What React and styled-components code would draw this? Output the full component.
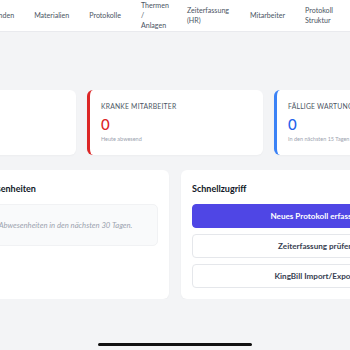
import styled, { createGlobalStyle } from "styled-components";

const GlobalStyle = createGlobalStyle`
body{
    margin:0;
    background:#f3f4f6;
    font-family: Lato, "Noto Sans", sans-serif;
    overflow:hidden;
}
`

const Header = styled.header`
height:31px;
background:#fff;
border-bottom:1px solid #e9eaee;
display:flex;
justify-content:flex-end;
align-items:center;
gap:20px;
padding-right:17px;
overflow:hidden;
`

const NavItem = styled.a`
flex-shrink:0;
width:${props => props.$w ? props.$w + 'px' : 'min-content'};
font-size:7.1px;
line-height:10px;
color:#4b5563;
text-decoration:none;
`

const Main = styled.main`
display:flex;
justify-content:center;
padding-top:58px;
`

const Inner = styled.div`
width:550px;
flex-shrink:0;
`

const StatGrid = styled.div`
display:grid;
grid-template-columns:repeat(3, 1fr);
gap:11px;
`

const StatCard = styled.div`
background:#fff;
border-radius:6px;
border-left:${props => props.$accent ? `3px solid ${props.$accent}` : 'none'};
padding:12px 12px 12px ${props => props.$accent ? '11px' : '14px'};
box-shadow:0 1px 2px rgba(0,0,0,0.03);
`

const StatLabel = styled.div`
font-size:6.8px;
line-height:9px;
letter-spacing:0.2px;
color:#4b5563;
text-transform:uppercase;
margin-bottom:4px;
`

const StatValue = styled.div`
font-size:15px;
line-height:18px;
font-weight:500;
color:${props => props.$color};
`

const StatSub = styled.div`
font-size:5.5px;
line-height:7px;
color:#9ca3af;
margin-top:3px;
`

const Lower = styled.div`
display:grid;
grid-template-columns:1fr 1fr;
gap:12px;
margin-top:15px;
`

const Card = styled.div`
background:#fff;
border-radius:6px;
padding:13px 11px 11px;
box-shadow:0 1px 2px rgba(0,0,0,0.03);
`

const CardTitle = styled.h3`
margin:0 0 9px;
font-size:9px;
line-height:12px;
font-weight:700;
color:#111827;
`

const EmptyBox = styled.div`
background:#f9fafb;
border:1px solid #f1f2f4;
border-radius:5px;
padding:15px 12px;
text-align:center;
white-space:nowrap;
font-size:7.7px;
line-height:10px;
font-style:italic;
color:#9ca3af;
`

const Actions = styled.div`
display:flex;
flex-direction:column;
gap:6px;
`

const Action = styled.button`
height:24px;
border-radius:4px;
font-family:inherit;
font-size:8.1px;
font-weight:700;
cursor:pointer;
border:1px solid ${props => props.$primary ? '#4f46e5' : '#e5e7eb'};
background:${props => props.$primary ? '#4f46e5' : '#fff'};
color:${props => props.$primary ? '#fff' : '#374151'};
`

const HomeBar = styled.div`
position:fixed;
left:50%;
bottom:4px;
transform:translateX(-50%);
width:154px;
height:3px;
border-radius:2px;
background:#111;
`

const navItems = [
    { label: 'Dashboard' },
    { label: 'Kunden' },
    { label: 'Materialien' },
    { label: 'Protokolle' },
    { label: 'Thermen / Anlagen', w: 26 },
    { label: 'Zeiterfassung (HR)', w: 43 },
    { label: 'Mitarbeiter' },
    { label: 'Protokoll Struktur' },
]

const App = () => {
    return (
        <>
            <GlobalStyle />
            <Header>
                {navItems.map(item => (
                    <NavItem key={item.label} $w={item.w}>{item.label}</NavItem>
                ))}
            </Header>
            <Main>
                <Inner>
                    <StatGrid>
                        <StatCard>
                            <StatLabel>Aktive Mitarbeiter</StatLabel>
                            <StatValue $color="#111827">0</StatValue>
                            <StatSub>Heute im Dienst</StatSub>
                        </StatCard>
                        <StatCard $accent="#dc2626">
                            <StatLabel>Kranke Mitarbeiter</StatLabel>
                            <StatValue $color="#dc2626">0</StatValue>
                            <StatSub>Heute abwesend</StatSub>
                        </StatCard>
                        <StatCard $accent="#3b82f6">
                            <StatLabel>Fällige Wartungen</StatLabel>
                            <StatValue $color="#2563eb">0</StatValue>
                            <StatSub>In den nächsten 15 Tagen</StatSub>
                        </StatCard>
                    </StatGrid>
                    <Lower>
                        <Card>
                            <CardTitle>Bevorstehende Abwesenheiten</CardTitle>
                            <EmptyBox>Keine anstehenden Abwesenheiten in den nächsten 30 Tagen.</EmptyBox>
                        </Card>
                        <Card>
                            <CardTitle>Schnellzugriff</CardTitle>
                            <Actions>
                                <Action $primary>Neues Protokoll erfassen</Action>
                                <Action>Zeiterfassung prüfen</Action>
                                <Action>KingBill Import/Export</Action>
                            </Actions>
                        </Card>
                    </Lower>
                </Inner>
            </Main>
            <HomeBar />
        </>
    )
}

export default App
